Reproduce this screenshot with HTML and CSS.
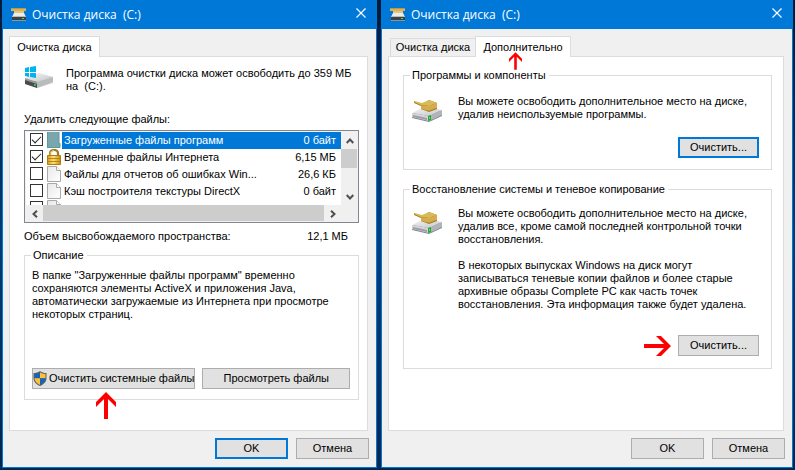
FILE: index.html
```html
<!DOCTYPE html>
<html lang="ru">
<head>
<meta charset="utf-8">
<title>Очистка диска (C:)</title>
<meta name="viewport" content="width=device-width, initial-scale=1">
<link rel="stylesheet" href="styles.css">
</head>
<body>
<svg class="defs" aria-hidden="true">
  <defs>
    <linearGradient id="metal" x1="0" y1="0" x2="1" y2="1"><stop offset="0" stop-color="#f4f5f6"/><stop offset="1" stop-color="#c4c6c9"/></linearGradient>
    <linearGradient id="paper" x1="0" y1="0" x2="1" y2="1"><stop offset="0" stop-color="#e8e8e8"/><stop offset="1" stop-color="#ffffff"/></linearGradient>
    <linearGradient id="gold" x1="0" y1="0" x2="1" y2="0"><stop offset="0" stop-color="#d69b19"/><stop offset=".45" stop-color="#ffe07a"/><stop offset="1" stop-color="#c58a12"/></linearGradient>
    <symbol id="title-drive" viewBox="0 0 16 13">
      <path d="M0 0h15v3H0z" fill="#d4b35c"/><path d="M0 0h15v1H0z" fill="#b8974a"/><path d="M3 3h10v2H3z" fill="#e3c67d"/>
      <path d="M3 5h10l2 4H1z" fill="#ececec"/><path d="M1 8h14v4H1z" fill="#3d4145"/><path d="M1 8h14v1H1z" fill="#b9bcbe"/><path d="M1 12h14v1H1z" fill="#8f9497"/><path d="M11 10h2v1h-2z" fill="#43e04a"/>
    </symbol>
    <symbol id="brush-drive" viewBox="0 0 32 24">
      <path d="M0 15 12 9 30 12v5L17 23 0 19z" fill="#85888c"/>
      <path d="M0 14 12 8 30 11 17 17z" fill="url(#metal)"/>
      <path d="M0 14 17 17v5L0 18z" fill="#d3d5d8"/><path d="M1 16 15 19v2L1 18z" fill="#9b9ea6"/>
      <path d="M17 17 30 11v5L17 22z" fill="#b1b4b8"/><path d="M16 17l3-1v5l-3 1z" fill="#22a838"/><path d="M17 18h1v2h-1z" fill="#62ee5c"/>
      <path d="M2 2 11 5 17 1 25 4v6l-8 3-8-3V7L2 4z" fill="#a97a1c"/>
      <path d="M2 2 10 4 17 1 25 4 17 7 9 6 2 3z" fill="#dab957"/>
      <path d="M9 6 17 7 25 4v5l-8 3-8-2z" fill="#cb9f3d"/>
      <path d="M10 7v3m2-3v3m2-3v4m2-4v4m2-5v5m2-5v4m2-5v4m2-5v5" stroke="#ecd083" stroke-width=".6"/>
    </symbol>
    <symbol id="windows-drive" viewBox="0 0 32 24">
      <path d="M1 13 15 8 29 11v6L13 22 1 18z" fill="#d4d6d8"/>
      <path d="M1 12 15 7 29 11 13 16z" fill="url(#metal)"/><path d="M1 13 13 16v6L1 18z" fill="#4a4d50"/><path d="M1 12 13 16v2L1 14z" fill="#9a9da0"/><path d="M13 16 29 11v5L13 22z" fill="#b9bbbd"/><circle cx="11" cy="19" r="1" fill="#35df48"/>
      <path d="M1 2 5 1v5H1zM6 1 12 0v6H6zM1 7h4v4L1 10zM6 7h6v5L6 11z" fill="#00b4f0"/>
    </symbol>
    <symbol id="page" viewBox="0 0 14 16">
      <path d="M.5.5h9l4 4v11H.5z" fill="url(#paper)" stroke="#a9a9a9"/><path d="M9.500.5v4h4" fill="#fff" stroke="#a9a9a9"/>
    </symbol>
    <symbol id="page-selected" viewBox="0 0 14 16">
      <path d="M0 0h12v11h1v5H0z" fill="#78a8ae"/><path d="M.5 0v15.500h12.500V11.500H12V0" fill="none" stroke="#5f979f"/>
    </symbol>
    <symbol id="lock" viewBox="0 0 14 16">
      <path d="M3 8V4.500C3 2.500 4.500 1 7 1s4 1.500 4 3.500V8" fill="none" stroke="#9d7b24" stroke-width="2.200"/><path d="M3.200 7V4.500C3.200 2.500 5 1.500 7 1.500" fill="none" stroke="#e6c867"/>
      <path d="M.5 6.500h13v9H.5z" fill="url(#gold)" stroke="#ae7b0d"/><path d="M1 9.500h12M1 12.500h12" stroke="#bb840f"/>
    </symbol>
    <symbol id="shield" viewBox="0 0 14 15">
      <path d="M7 0C5 1.500 3 2 .5 2v5c0 4 3 6.500 6.500 8 3.500-1.500 6.500-4 6.500-8V2C11 2 9 1.500 7 0z" fill="#59616a"/>
      <path d="M7 1.200C5.500 2.300 4 2.800 1.500 2.900v4.300H7z" fill="#1764c0"/><path d="M7 1.200c1.500 1.100 3 1.600 5.500 1.700v4.300H7z" fill="#ffc031"/><path d="M1.500 7.200c.2 3.200 2.500 5.300 5.500 6.700V7.200z" fill="#ffc031"/><path d="M12.500 7.200c-.2 3.200-2.500 5.300-5.500 6.700V7.200z" fill="#1764c0"/>
    </symbol>
    <symbol id="close" viewBox="0 0 10 10"><path d="M.5.5l9 9m0-9l-9 9" stroke="#fff" stroke-width="1.200"/></symbol>
    <symbol id="chevron" viewBox="0 0 8 6"><path d="M.7 5 4 1.500 7.300 5" fill="none" stroke="#505050" stroke-width="2"/></symbol>
    <symbol id="arrow" viewBox="0 0 20 27"><path d="M0 10v5l8-8v20h4V7l8 8v-5L10 0z" fill="#f00"/></symbol>
  </defs>
</svg>

<main class="desktop">
  <section class="window">
    <header class="titlebar">
      <svg class="titlebar-icon" aria-hidden="true"><use href="#title-drive"/></svg>
      <h1>Очистка диска&nbsp; (C:)</h1>
      <button class="close" type="button" aria-label="Закрыть"><svg><use href="#close"/></svg></button>
    </header>
    <nav class="tabs" role="tablist">
      <button class="tab active" type="button" role="tab" aria-selected="true">Очистка диска</button>
    </nav>
    <div class="panel cleanup" role="tabpanel">
      <div class="intro">
        <svg class="drive" aria-hidden="true"><use href="#windows-drive"/></svg>
        <p>Программа очистки диска может освободить до 359 МБ<br>на&nbsp; (C:).</p>
      </div>
      <p class="list-label">Удалить следующие файлы:</p>
      <div class="listbox">
        <ul class="files">
          <li class="selected"><input type="checkbox" id="f1" checked><svg aria-hidden="true"><use href="#page-selected"/></svg><label for="f1"><span>Загруженные файлы программ</span><span>0 байт</span></label></li>
          <li><input type="checkbox" id="f2" checked><svg aria-hidden="true"><use href="#lock"/></svg><label for="f2"><span>Временные файлы Интернета</span><span>6,15 МБ</span></label></li>
          <li><input type="checkbox" id="f3"><svg aria-hidden="true"><use href="#page"/></svg><label for="f3"><span>Файлы для отчетов об ошибках Win...</span><span>26,6 КБ</span></label></li>
          <li><input type="checkbox" id="f4"><svg aria-hidden="true"><use href="#page"/></svg><label for="f4"><span>Кэш построителя текстуры DirectX</span><span>0 байт</span></label></li>
          <li><input type="checkbox" aria-label="Файлы"><svg aria-hidden="true"><use href="#page"/></svg></li>
        </ul>
        <div class="scroll vertical">
          <button type="button" aria-label="Вверх"><svg><use href="#chevron"/></svg></button>
          <div class="track"><div class="thumb"></div></div>
          <button type="button" aria-label="Вниз"><svg class="down"><use href="#chevron"/></svg></button>
        </div>
        <div class="scroll horizontal">
          <button type="button" aria-label="Влево"><svg class="left"><use href="#chevron"/></svg></button>
          <div class="thumb"></div>
          <button type="button" aria-label="Вправо"><svg class="right"><use href="#chevron"/></svg></button>
        </div>
      </div>
      <p class="total"><span>Объем высвобождаемого пространства:</span><span>12,1 МБ</span></p>
      <fieldset class="description">
        <legend>Описание</legend>
        <p>В папке "Загруженные файлы программ" временно<br>сохраняются элементы ActiveX и приложения Java,<br>автоматически загружаемые из Интернета при просмотре<br>некоторых страниц.</p>
        <div class="actions">
          <div class="pointed system">
            <button class="button" type="button"><svg class="shield" aria-hidden="true"><use href="#shield"/></svg>Очистить системные файлы</button>
            <svg class="arrow below" aria-hidden="true"><use href="#arrow"/></svg>
          </div>
          <button class="button view" type="button">Просмотреть файлы</button>
        </div>
      </fieldset>
    </div>
    <footer class="footer">
      <button class="button default" type="button">OK</button>
      <button class="button" type="button">Отмена</button>
    </footer>
  </section>

  <section class="window">
    <header class="titlebar">
      <svg class="titlebar-icon" aria-hidden="true"><use href="#title-drive"/></svg>
      <h1>Очистка диска&nbsp; (C:)</h1>
      <button class="close" type="button" aria-label="Закрыть"><svg><use href="#close"/></svg></button>
    </header>
    <nav class="tabs" role="tablist">
      <button class="tab" type="button" role="tab" aria-selected="false">Очистка диска</button>
      <div class="pointed">
        <button class="tab active wide" type="button" role="tab" aria-selected="true">Дополнительно</button>
        <svg class="arrow under-tab" aria-hidden="true"><use href="#arrow"/></svg>
      </div>
    </nav>
    <div class="panel more" role="tabpanel">
      <fieldset class="option">
        <legend>Программы и компоненты</legend>
        <div class="option-body">
          <svg class="drive" aria-hidden="true"><use href="#brush-drive"/></svg>
          <p>Вы можете освободить дополнительное место на диске,<br>удалив неиспользуемые программы.</p>
        </div>
        <div class="pointed clean">
          <button class="button default" type="button">Очистить...</button>
        </div>
      </fieldset>
      <fieldset class="option restore">
        <legend>Восстановление системы и теневое копирование</legend>
        <div class="option-body">
          <svg class="drive" aria-hidden="true"><use href="#brush-drive"/></svg>
          <div>
            <p>Вы можете освободить дополнительное место на диске,<br>удалив все, кроме самой последней контрольной точки<br>восстановления.</p>
            <p>В некоторых выпусках Windows на диск могут<br>записываться теневые копии файлов и более старые<br>архивные образы Complete PC как часть точек<br>восстановления. Эта информация также будет удалена.</p>
          </div>
        </div>
        <div class="pointed clean">
          <svg class="arrow beside" viewBox="0 0 27 20" aria-hidden="true"><path d="M17 0h-5l8 8H0v4h20l-8 8h5L27 10z" fill="#f00"/></svg>
          <button class="button" type="button">Очистить...</button>
        </div>
      </fieldset>
    </div>
    <footer class="footer">
      <button class="button" type="button">OK</button>
      <button class="button" type="button">Отмена</button>
    </footer>
  </section>
</main>
</body>
</html>
```
FILE: styles.css
```css
* { box-sizing: border-box; }

body {
  margin: 0;
  background: #012347;
  color: #000;
  font: 11px/13px "Liberation Sans", Arial, sans-serif;
}

h1, p, ul { margin: 0; padding: 0; }
ul { list-style: none; }
button { font: inherit; color: inherit; padding: 0; margin: 0; }
svg { display: block; flex: none; }
.defs { position: absolute; width: 0; height: 0; }

.desktop {
  display: grid;
  grid-template-columns: 375fr 412fr;
  gap: 4px;
  min-height: 100vh;
  padding: 0 2px 2px;
  background: linear-gradient(#011a38, #003d78 50%, #00284f);
}

.window {
  display: flex;
  flex-direction: column;
  min-width: 0;
  padding: 0 8px 8px 6px;
  background: #f0f0f0;
  border: 1px solid #0078d7;
  border-top: 0;
}

/* Title bar */
.titlebar {
  display: flex;
  align-items: center;
  height: 29px;
  margin: 0 -8px 7px -6px;
  padding: 0 10px 0 8px;
  background: #0078d7;
  color: #fff;
}
.titlebar-icon { width: 16px; height: 13px; margin-right: 5px; }
.titlebar h1 { flex: 1; font: 12px/16px "Open Sans", "Noto Sans", sans-serif; }
.close { border: 0; background: none; padding-bottom: 3px; }
.close svg { width: 10px; height: 10px; }

/* Tabs */
.tabs { display: flex; align-items: flex-end; height: 21px; margin-bottom: -1px; }
.tab {
  height: 18px;
  width: 86px;
  margin: 0 0 1px 2px;
  border: 1px solid #dcdcdc;
  border-bottom: 0;
  background: #f0f0f0;
  white-space: nowrap;
}
.tab.active { width: 91px; height: 21px; margin: 0; background: #fff; }
.tab.active.wide { width: 96px; margin-left: -1px; }
.pointed { position: relative; }
.tabs, .tab.active { position: relative; }

.panel { flex: 1; background: #fff; border: 1px solid #dcdcdc; }
.cleanup { padding: 9px 8px 0 14px; }
.more { padding: 12px 11px 0 14px; }
.drive { width: 32px; height: 24px; }

.intro { display: flex; gap: 10px; }
.intro p { padding-top: 1px; }
.list-label { margin: 20px 0 4px; }

/* File list */
.listbox {
  display: grid;
  grid-template: 73px 16px / 1fr 16px;
  border: 1px solid #828790;
  padding: 1px;
  background: #f0f0f0;
}
.files { overflow: hidden; background: #fff; }
.files li { display: flex; height: 17px; padding-left: 4px; }
.files input {
  appearance: none;
  flex: none;
  width: 13px;
  height: 13px;
  margin: 1px 4px 0 0;
  border: 1px solid #333;
  background: #fff;
}
.files input:checked { display: grid; }
.files input:checked::before {
  content: "";
  width: 8px;
  height: 4px;
  margin: 2px 1px;
  border: solid #222;
  border-width: 0 0 1px 1px;
  transform: rotate(-45deg);
}
.files svg { width: 14px; height: 16px; }
.files label {
  display: flex;
  flex: 1;
  justify-content: space-between;
  margin-left: 1px;
  padding: 2px 5px 2px 2px;
  white-space: nowrap;
}
.selected label { background: #0078d7; color: #fff; }
.scroll { display: flex; }
.scroll button { display: grid; place-items: center; width: 17px; height: 17px; border: 0; background: none; }
.scroll svg { width: 8px; height: 6px; }
.scroll .down { transform: rotate(180deg); }
.scroll .left { transform: rotate(-90deg); }
.scroll .right { transform: rotate(90deg); }
.thumb { background: #cdcdcd; }
.vertical { flex-direction: column; }
.vertical .track { flex: 1; }
.vertical .thumb { height: 19px; }
.horizontal .thumb { flex: 1; }

.total { display: flex; justify-content: space-between; margin: 7px 0 6px; padding-right: 11px; }

/* Group boxes */
fieldset { min-width: 0; margin: 0; border: 1px solid #dcdcdc; }
legend { padding: 0 3px 0 2px; }
.description { padding: 7px 8px 10px 7px; }
.description legend { margin-left: -1px; }
.description p { white-space: nowrap; }
.actions { display: flex; gap: 7px; margin-top: 47px; }
.system { flex: 163; }
.view { flex: 148; }
.system .button { width: 100%; display: flex; align-items: center; justify-content: center; gap: 2px; }
.shield { width: 14px; height: 15px; }

.option { padding: 13px 12px 11px 8px; }
.option legend { margin-left: -2px; }
.option-body { display: flex; gap: 14px; }
.option-body .drive { margin-top: 4px; }
.option-body p { margin-bottom: 13px; white-space: nowrap; }
.option + .option { margin-top: 13px; }
.clean { display: flex; justify-content: flex-end; margin-top: 3px; }
.restore { padding-top: 11px; padding-bottom: 12px; }
.restore .clean { margin-top: 11px; }
.clean .button { width: 81px; }

/* Buttons */
.button {
  height: 21px;
  border: 1px solid #adadad;
  background: #e1e1e1;
  white-space: nowrap;
}
.button.default { border: 2px solid #0078d7; }
.footer { display: flex; justify-content: flex-end; gap: 8px; margin: 7px -1px 0 0; }
.footer .button { width: 73px; }

/* Pointers laid over the dialogs */
.arrow { position: absolute; width: 20px; height: 27px; }
.arrow.below { top: 24px; left: 64px; }
.arrow.under-tab { width: 13px; height: 18px; top: 16px; left: 33px; }
.arrow.beside { width: 27px; height: 20px; right: 88px; top: 1px; }
```
